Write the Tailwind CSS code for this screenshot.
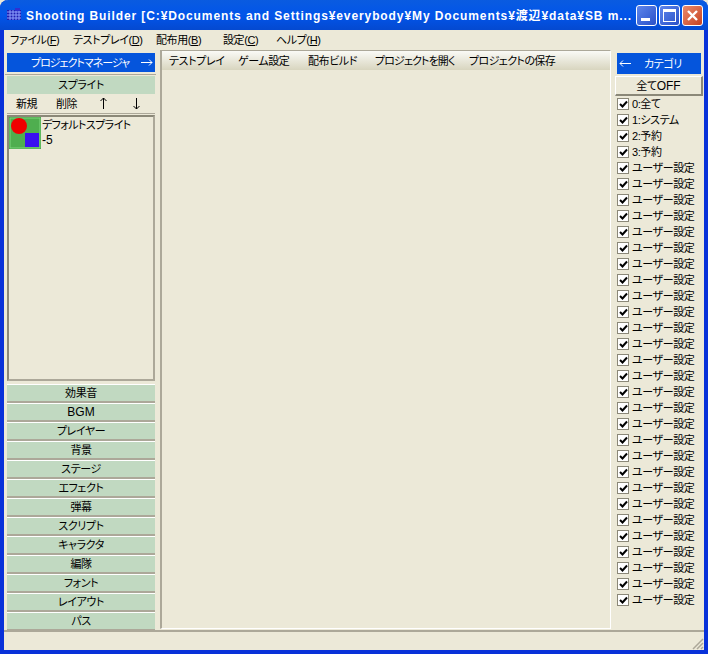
<!DOCTYPE html>
<html lang="ja">
<head>
  <meta charset="UTF-8">
  <title>Shooting Builder</title>
  <script src="https://cdn.jsdelivr.net/npm/@tailwindcss/browser@4"></script>
</head>
<body class="w-[708px] h-[654px] overflow-hidden bg-[#ece9d8] text-black text-[11px] tracking-[-0.4px] leading-[16px] [font-feature-settings:'palt'] font-['Liberation_Sans','Noto_Sans_CJK_JP',sans-serif]">
  <div class="w-[708px] h-[654px] flex flex-col border-x-4 border-b-4 border-[#0831d9] rounded-t-lg">
    <!-- Title bar -->
    <div class="-mx-1 h-[30px] shrink-0 flex items-center pl-[6px] pr-[5px] rounded-t-lg bg-gradient-to-b from-[#0a5be0] via-[#0255ea] to-[#0449d0]">
      <svg class="w-4 h-4 shrink-0" viewBox="0 0 16 16">
        <rect x="1" y="3" width="14" height="10" fill="#1c1cb0"/>
        <path d="M1 5h14M1 8h14M1 11h14M4 3v10M7 3v10M10 3v10M13 3v10" stroke="#8fa0ff" stroke-width="1"/>
        <rect x="9" y="1" width="5" height="3" fill="#3030d0"/>
      </svg>
      <span class="ml-1 pt-[2px] flex-1 whitespace-nowrap overflow-hidden text-white font-bold text-[12px] tracking-[0.9px]">Shooting Builder [C:¥Documents and Settings¥everybody¥My Documents¥渡辺¥data¥SB m...</span>
      <div class="flex gap-[2px]">
        <div class="w-[21px] h-[21px] rounded-[3px] border border-white bg-gradient-to-br from-[#5f86ec] to-[#2a50c8] flex items-end pl-1 pb-1"><div class="w-[9px] h-[3px] bg-white"></div></div>
        <div class="w-[21px] h-[21px] rounded-[3px] border border-white bg-gradient-to-br from-[#5f86ec] to-[#2a50c8] flex items-center justify-center"><div class="w-[13px] h-[13px] border border-white border-t-[3px]"></div></div>
        <div class="w-[21px] h-[21px] rounded-[3px] border border-white bg-gradient-to-br from-[#e88a6c] to-[#c8401c] flex items-center justify-center">
          <svg class="w-[13px] h-[13px]" viewBox="0 0 13 13"><path d="M2 2l9 9M11 2l-9 9" stroke="#fff" stroke-width="2.4"/></svg>
        </div>
      </div>
    </div>

    <!-- Menu -->
    <div class="h-5 shrink-0 flex items-center pl-[6px] whitespace-nowrap">
      <span class="w-[63px]">ファイル(<span class="underline">F</span>)</span>
      <span class="w-[83px]">テストプレイ(<span class="underline">D</span>)</span>
      <span class="w-[67px]">配布用(<span class="underline">B</span>)</span>
      <span class="w-[53px]">設定(<span class="underline">C</span>)</span>
      <span>ヘルプ(<span class="underline">H</span>)</span>
    </div>

    <!-- Body -->
    <div class="flex-1 min-h-0 flex">
      <!-- Left panel -->
      <div class="w-[151px] ml-px shrink-0 flex flex-col pt-[3px]">
        <div class="ml-[2px] mr-px h-[19px] shrink-0 bg-[#0555dc] text-white flex items-center justify-between pl-6 pr-[2px] whitespace-nowrap">
          <span class="tracking-[-1px]">プロジェクトマネージャ</span>
          <svg class="w-3 h-[7px]" viewBox="0 0 12 7"><path d="M0 3.5h11M8 .5l3 3-3 3" fill="none" stroke="#fff" stroke-width="1"/></svg>
        </div>
        <div class="h-[3px] shrink-0 border-b border-[#aca899]"></div>
        <div class="mt-px ml-[2px] mr-px h-[18px] shrink-0 bg-[#c1d9c1] flex items-center justify-center">スプライト</div>
        <div class="ml-[2px] mr-px h-5 shrink-0 flex items-center pl-[9px] border-b border-[#aca899] whitespace-nowrap">
          <span class="w-10">新規</span><span class="w-[44px]">削除</span>
          <svg class="w-[7px] h-[11px]" viewBox="0 0 7 11"><path d="M3.5 0v11M.5 3l3-3 3 3" fill="none" stroke="#000" stroke-width="1"/></svg>
          <svg class="ml-[26px] w-[7px] h-[11px]" viewBox="0 0 7 11"><path d="M3.5 0v11M.5 8l3 3 3-3" fill="none" stroke="#000" stroke-width="1"/></svg>
        </div>
        <div class="mt-px ml-[2px] mr-px h-[266px] shrink-0 border-2 border-t-[#8b8878] border-l-[#8b8878] border-r-[#aca899] border-b-[#aca899] flex items-start">
          <svg class="w-8 h-8 shrink-0" viewBox="0 0 32 32">
            <rect width="32" height="32" fill="#3f9a3f"/>
            <rect x="1" y="1" width="30" height="30" fill="#4fae4f" stroke="#7ed87e" stroke-width="1"/>
            <rect x="16" y="16" width="14" height="14" fill="#3a10f0"/>
            <circle cx="10" cy="9" r="8" fill="#f00000"/>
          </svg>
          <div class="ml-px tracking-[-0.6px]">デフォルトスプライト<span class="block -mt-px text-[12px] tracking-normal">-5</span></div>
        </div>
        <div class="mt-[3px] flex flex-col">
          <div class="h-[19px] ml-[2px] mr-px bg-[#c1d9c1] border-t border-white border-b-2 border-b-[#aca899] flex items-center justify-center">効果音</div>
          <div class="h-[19px] ml-[2px] mr-px bg-[#c1d9c1] border-t border-white border-b-2 border-b-[#aca899] flex items-center justify-center text-[12px] tracking-normal">BGM</div>
          <div class="h-[19px] ml-[2px] mr-px bg-[#c1d9c1] border-t border-white border-b-2 border-b-[#aca899] flex items-center justify-center">プレイヤー</div>
          <div class="h-[19px] ml-[2px] mr-px bg-[#c1d9c1] border-t border-white border-b-2 border-b-[#aca899] flex items-center justify-center">背景</div>
          <div class="h-[19px] ml-[2px] mr-px bg-[#c1d9c1] border-t border-white border-b-2 border-b-[#aca899] flex items-center justify-center">ステージ</div>
          <div class="h-[19px] ml-[2px] mr-px bg-[#c1d9c1] border-t border-white border-b-2 border-b-[#aca899] flex items-center justify-center">エフェクト</div>
          <div class="h-[19px] ml-[2px] mr-px bg-[#c1d9c1] border-t border-white border-b-2 border-b-[#aca899] flex items-center justify-center">弾幕</div>
          <div class="h-[19px] ml-[2px] mr-px bg-[#c1d9c1] border-t border-white border-b-2 border-b-[#aca899] flex items-center justify-center">スクリプト</div>
          <div class="h-[19px] ml-[2px] mr-px bg-[#c1d9c1] border-t border-white border-b-2 border-b-[#aca899] flex items-center justify-center">キャラクタ</div>
          <div class="h-[19px] ml-[2px] mr-px bg-[#c1d9c1] border-t border-white border-b-2 border-b-[#aca899] flex items-center justify-center">編隊</div>
          <div class="h-[19px] ml-[2px] mr-px bg-[#c1d9c1] border-t border-white border-b-2 border-b-[#aca899] flex items-center justify-center">フォント</div>
          <div class="h-[19px] ml-[2px] mr-px bg-[#c1d9c1] border-t border-white border-b-2 border-b-[#aca899] flex items-center justify-center">レイアウト</div>
          <div class="h-[19px] ml-[2px] mr-px bg-[#c1d9c1] border-t border-white border-b-2 border-b-[#aca899] flex items-center justify-center">パス</div>
        </div>
      </div>

      <!-- Center panel -->
      <div class="ml-1 w-[451px] shrink-0 mb-[1px] border-l-2 border-t border-[#aca899] border-r border-r-white border-b border-b-white flex flex-col">
        <div class="h-[19px] shrink-0 flex items-center pl-[7px] whitespace-nowrap bg-gradient-to-b from-[#fafaf6] to-[#d8d5bf]">
          <span class="w-[69px]">テストプレイ</span>
          <span class="w-[70px]">ゲーム設定</span>
          <span class="w-[67px]">配布ビルド</span>
          <span class="w-[94px] tracking-[-0.9px]">プロジェクトを開く</span>
          <span class="tracking-[-0.6px]">プロジェクトの保存</span>
        </div>
      </div>

      <!-- Right panel -->
      <div class="flex-1 pl-[4px] pt-[3px] flex flex-col">
        <div class="ml-[2px] w-[84px] h-[21px] shrink-0 bg-[#0555dc] text-white flex items-center pl-[2px] gap-[13px] whitespace-nowrap">
          <svg class="w-3 h-[7px]" viewBox="0 0 12 7"><path d="M12 3.5H1M4 .5l-3 3 3 3" fill="none" stroke="#fff" stroke-width="1"/></svg>
          <span>カテゴリ</span>
        </div>
        <div class="mt-[2px] w-[88px] h-[20px] shrink-0 border border-white border-r-2 border-b-2 border-r-[#8b8878] border-b-[#8b8878] flex items-center justify-center">全て<span class="text-[12px] tracking-normal">OFF</span></div>
        <div class="pl-[2px] flex flex-col">
          <label class="h-4 flex items-center gap-[3px] whitespace-nowrap"><span class="w-[12px] h-[12px] bg-white border border-[#8b8878] flex items-center justify-center"><svg class="w-[9px] h-[9px]" viewBox="0 0 9 9"><path d="M1 4l2.5 2.5L8 1.5" fill="none" stroke="#000" stroke-width="2"/></svg></span>0:全て</label>
          <label class="h-4 flex items-center gap-[3px] whitespace-nowrap"><span class="w-[12px] h-[12px] bg-white border border-[#8b8878] flex items-center justify-center"><svg class="w-[9px] h-[9px]" viewBox="0 0 9 9"><path d="M1 4l2.5 2.5L8 1.5" fill="none" stroke="#000" stroke-width="2"/></svg></span>1:システム</label>
          <label class="h-4 flex items-center gap-[3px] whitespace-nowrap"><span class="w-[12px] h-[12px] bg-white border border-[#8b8878] flex items-center justify-center"><svg class="w-[9px] h-[9px]" viewBox="0 0 9 9"><path d="M1 4l2.5 2.5L8 1.5" fill="none" stroke="#000" stroke-width="2"/></svg></span>2:予約</label>
          <label class="h-4 flex items-center gap-[3px] whitespace-nowrap"><span class="w-[12px] h-[12px] bg-white border border-[#8b8878] flex items-center justify-center"><svg class="w-[9px] h-[9px]" viewBox="0 0 9 9"><path d="M1 4l2.5 2.5L8 1.5" fill="none" stroke="#000" stroke-width="2"/></svg></span>3:予約</label>
          <div id="user-rows" class="flex flex-col"></div>
        </div>
      </div>
    </div>

    <!-- Status bar -->
    <div class="h-[20px] shrink-0 border-t-2 border-[#aca899] flex justify-end items-end">
      <svg class="w-[14px] h-[14px]" viewBox="0 0 14 14"><path d="M13 3L3 13M13 7L7 13M13 11L11 13" stroke="#aca899" stroke-width="1.5"/></svg>
    </div>
  </div>

  <script>
    // 28 identical category rows
    const rows = document.getElementById('user-rows');
    rows.innerHTML = Array(28).fill(`
      <label class="h-4 flex items-center gap-[3px] whitespace-nowrap"><span class="w-[12px] h-[12px] bg-white border border-[#8b8878] flex items-center justify-center"><svg class="w-[9px] h-[9px]" viewBox="0 0 9 9"><path d="M1 4l2.5 2.5L8 1.5" fill="none" stroke="#000" stroke-width="2"/></svg></span>ユーザー設定</label>
    `).join('');
  </script>
</body>
</html>
